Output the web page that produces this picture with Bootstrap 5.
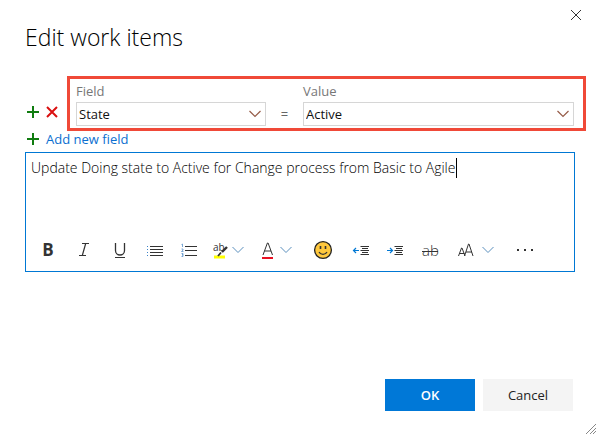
<!DOCTYPE html>
<html lang="en">
<head>
<meta charset="utf-8">
<meta name="viewport" content="width=device-width, initial-scale=1">
<title>Edit work items</title>
<link href="https://cdn.jsdelivr.net/npm/bootstrap@5.3.0/dist/css/bootstrap.min.css" rel="stylesheet">
<style>
body { font: 13px/20px "Open Sans", "Noto Sans", sans-serif; color: #222; background: #fff; }
svg { display: block; fill: none; stroke: #333; flex: none; }
svg text { fill: #333; stroke: none; }
.dialog { min-height: 100vh; padding: 8px 25px 27px; position: relative; }
.dialog-close { margin-right: -9px; }
.icon-btn { border: 0; background: none; padding: 0; display: flex; align-items: center; color: #333; }
.dialog-title { font-size: 23px; line-height: 30px; font-weight: 300; margin: 0 0 24px; color: #000; }
.row-actions { padding: 0 8px 12px 1px; gap: 5px; }
.field-group { border: 3px solid #f04938; padding: 2px 9px 2px 6px; min-width: 0; margin-right: -11px; }
.field-group label { color: #777; font-weight: 500; padding-bottom: 1px; }
.field-group .form-select { height: 24px; padding: 0 24px 0 2px; font-size: 13px; line-height: 20px; border: 1px solid #d6d6d6; border-radius: 0; color: #111;
  background: #fff url("data:image/svg+xml,%3Csvg xmlns='http://www.w3.org/2000/svg' viewBox='0 0 12 8'%3E%3Cpath d='M.5 1l5.500 5.500L11.500 1' fill='none' stroke='%23965c48' stroke-width='1.200'/%3E%3C/svg%3E") no-repeat right 4px center / 12px 8px; }
.col-field { flex: 190 1 0; }
.col-value { flex: 271 1 0; }
.equals { width: 37px; line-height: 24px; color: #666; }
.add-link { color: #0b6fd0; text-decoration: none; gap: 6px; padding-left: 1px; margin-top: -2px; }
.editor { border: 1px solid #0078d4; position: relative; margin-top: 3px; }
.editor textarea { border: 0; border-radius: 0; box-shadow: none !important; resize: none; font-size: 14px; font-weight: 300; line-height: 20px; padding: 5px; height: 76px; color: #000; }
.caret { position: absolute; left: 430px; top: 5px; width: 1px; height: 20px; background: #000; }
.tools { height: 42px; padding: 0 4px; }
.tool { width: 34px; height: 32px; justify-content: center; font-size: 17px; line-height: 24px; flex: none; }
.tool-text { width: 36px; }
.tool-wide { width: 42px; }
.tool-menu { width: auto; padding: 0 10px 0 7px; gap: 3px; }
.chev { stroke: #5b8fbd; }
.btn-ok, .btn-cancel { width: 90px; height: 32px; border-radius: 0; font-size: 13px; line-height: 20px; padding: 0; border: 0; }
.btn-ok { background: #0078d7; font-weight: 600; color: #fff; }
.btn-cancel { background: #f4f4f4; color: #222; }
.actions { padding-right: 2px; }
.grip { position: absolute; right: 4px; bottom: 4px; }
</style>
<script src="https://cdn.jsdelivr.net/npm/bootstrap@5.3.0/dist/js/bootstrap.bundle.min.js"></script>
</head>
<body>
<form class="dialog d-flex flex-column">
  <button type="button" class="icon-btn dialog-close align-self-end" aria-label="Close">
    <svg width="16" height="14" viewBox="0 0 16 14"><path d="M3 2l10 10M13 2L3 12"/></svg>
  </button>
  <h1 class="dialog-title">Edit work items</h1>
  <div class="d-flex align-items-end">
    <div class="row-actions d-flex">
      <button type="button" class="icon-btn" aria-label="Insert field"><svg width="14" height="14" viewBox="0 0 14 14"><path d="M7 1v12M1 7h12" stroke="#107c10" stroke-width="2"/></svg></button>
      <button type="button" class="icon-btn" aria-label="Remove field"><svg width="14" height="14" viewBox="0 0 14 14"><path d="M2 2l10 10M12 2L2 12" stroke="#da1010" stroke-width="2"/></svg></button>
    </div>
    <div class="field-group d-flex align-items-end flex-fill">
      <div class="col-field"><label class="d-block" for="field">Field</label><select class="form-select" id="field"><option>State</option></select></div>
      <span class="equals text-center">=</span>
      <div class="col-value"><label class="d-block" for="value">Value</label><select class="form-select" id="value"><option>Active</option></select></div>
    </div>
  </div>
  <a href="#" class="add-link d-flex align-items-center align-self-start"><svg width="14" height="14" viewBox="0 0 14 14"><path d="M7 1v12M1 7h12" stroke="#107c10" stroke-width="2"/></svg>Add new field</a>
  <div class="editor">
    <textarea class="form-control" aria-label="Comment" spellcheck="false">Update Doing state to Active for Change process from Basic to Agile</textarea>
    <span class="caret"></span>
    <div class="tools d-flex align-items-center">
      <button type="button" class="icon-btn tool tool-text fw-bold" aria-label="Bold">B</button>
      <button type="button" class="icon-btn tool tool-text" aria-label="Italic"><svg width="14" height="20" viewBox="0 0 14 20"><path d="M5 3.500h7M2 15.500h7M8.700 3.500l-3.400 12" stroke-width="1.200"/></svg></button>
      <button type="button" class="icon-btn tool tool-text" aria-label="Underline"><svg width="14" height="20" viewBox="0 0 14 20"><path d="M2.500 3v7.500a4.500 4.500 0 0 0 9 0V3" stroke-width="1.300"/><path d="M2 17.500h10"/></svg></button>
      <button type="button" class="icon-btn tool" aria-label="Bulleted list"><svg width="18" height="16" viewBox="0 0 18 16"><path d="M4 4.500h13M4 7.500h13M4 10.500h13M4 13.500h13"/><path d="M1 4.500h1M1 7.500h1M1 10.500h1M1 13.500h1" stroke="#3b83c8"/></svg></button>
      <button type="button" class="icon-btn tool" aria-label="Numbered list"><svg width="18" height="16" viewBox="0 0 18 16"><path d="M5 4.500h12M5 8.500h12M5 13.500h12"/><path d="M1.500 2.500l1-.5v3M1.500 7h1.500v1.200L1.500 9.500h2M1.500 11.500h1.500v1.300h-1 1v1.700H1.500" stroke="#5b93cc" stroke-width=".8"/></svg></button>
      <button type="button" class="icon-btn tool tool-menu" aria-label="Highlight colour"><svg width="16" height="18" viewBox="0 0 16 18"><path d="M1 16h11" stroke="#ff0" stroke-width="3"/><text x="0" y="10" font-size="10">ab</text><path d="M14 6l-5 5" stroke-width="2.400"/><path d="M8 11.500L5 15" stroke-width="1.800"/></svg><svg class="chev" width="12" height="8" viewBox="0 0 12 8"><path d="M.5 1L6 6.500 11.500 1"/></svg></button>
      <button type="button" class="icon-btn tool tool-menu" aria-label="Font colour"><svg width="16" height="20" viewBox="0 0 16 20"><path d="M2 15L6.400 3h.7L11.500 15M3.500 11H10"/><path d="M1 18h11" stroke="#e81123" stroke-width="2"/></svg><svg class="chev" width="12" height="8" viewBox="0 0 12 8"><path d="M.5 1L6 6.500 11.500 1"/></svg></button>
      <button type="button" class="icon-btn tool tool-wide" aria-label="Emoji"><svg width="20" height="20" viewBox="0 0 20 20"><circle cx="10" cy="10" r="8.400" fill="#ffc83d" stroke="#222" stroke-width="1.300"/><path d="M7.500 6v3M12.500 6v3" stroke-width="1.600"/><path d="M6 12a4.500 4.500 0 0 0 8 0" stroke-width="1.300"/></svg></button>
      <button type="button" class="icon-btn tool" aria-label="Decrease indent"><svg width="18" height="14" viewBox="0 0 18 14"><path d="M8.500 3.500H17M10 5.500h6M8.500 7.500H17M10 9.500h6M8.500 11.500H17"/><path d="M1.500 7.500H7M4 5L1.500 7.500 4 10" stroke="#0078d4" stroke-width="1.200"/></svg></button>
      <button type="button" class="icon-btn tool" aria-label="Increase indent"><svg width="18" height="14" viewBox="0 0 18 14"><path d="M8.500 3.500H17M10 5.500h6M8.500 7.500H17M10 9.500h6M8.500 11.500H17"/><path d="M1 7.500h5.500M4 5l2.500 2.500L4 10" stroke="#0078d4" stroke-width="1.200"/></svg></button>
      <button type="button" class="icon-btn tool tool-text" aria-label="Strikethrough"><svg width="18" height="18" viewBox="0 0 18 18"><text x="1" y="15" font-size="15" font-weight="300">ab</text><path d="M1 10.500h16"/></svg></button>
      <button type="button" class="icon-btn tool tool-menu" aria-label="Font size"><svg width="24" height="18" viewBox="0 0 24 18"><path d="M3.500 15L6.500 7h.5l3 8M4.500 12.500h5M9.500 15L13.500 3h.5l4 12M11 11h6"/></svg><svg class="chev" width="12" height="8" viewBox="0 0 12 8"><path d="M.5 1L6 6.500 11.500 1"/></svg></button>
      <button type="button" class="icon-btn tool tool-wide" aria-label="More options"><svg width="18" height="4" viewBox="0 0 18 4"><path d="M1 2h2M8 2h2M15 2h2" stroke-width="2"/></svg></button>
    </div>
  </div>
  <div class="actions d-flex justify-content-end gap-2 mt-auto">
    <button type="submit" class="btn btn-ok">OK</button>
    <button type="button" class="btn btn-cancel">Cancel</button>
  </div>
  <svg class="grip" width="10" height="10" viewBox="0 0 10 10"><path d="M0 10L10 0M4 10l6-6M7 10l3-3" stroke="#888"/></svg>
</form>
</body>
</html>
